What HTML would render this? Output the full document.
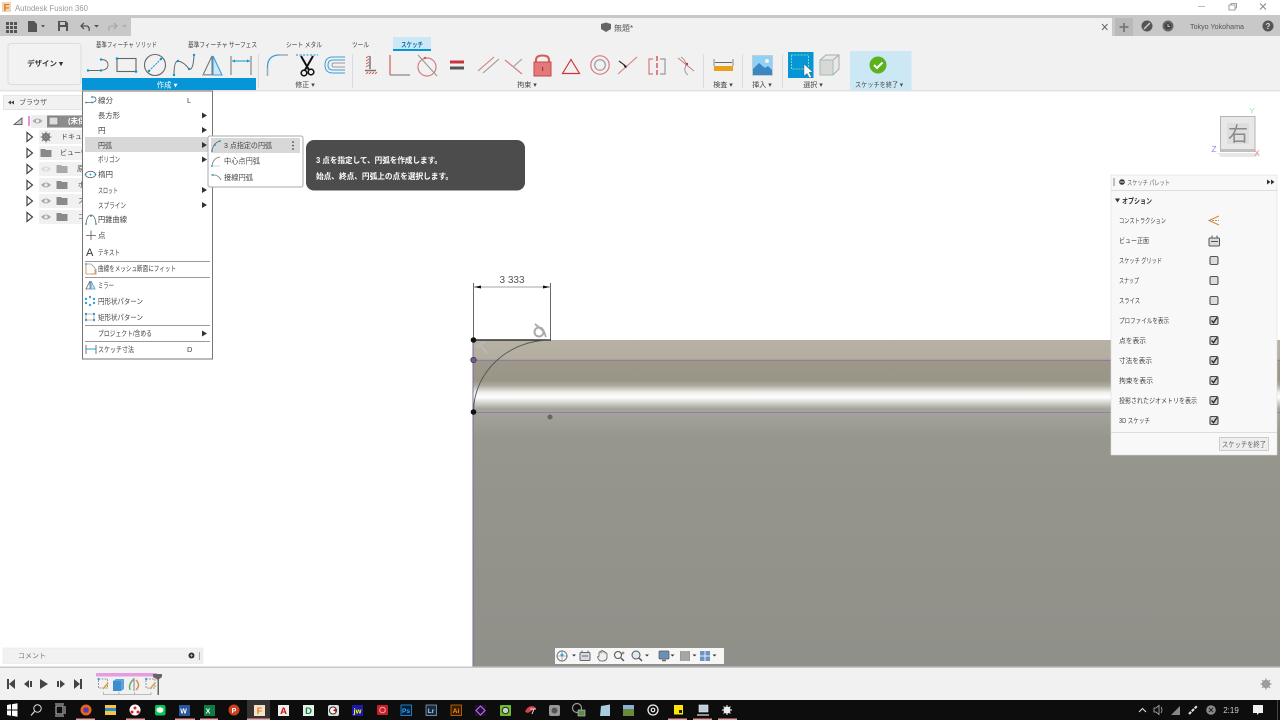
<!DOCTYPE html>
<html><head><meta charset="utf-8"><style>
html,body{margin:0;padding:0;width:1280px;height:720px;overflow:hidden;background:#fff}
svg{display:block;filter:blur(.35px)}
text{font-family:"Liberation Sans","Noto Sans CJK JP",sans-serif;font-size:7.5px;fill:#444}
.m{text-anchor:middle}
.b{font-weight:bold}
</style></head><body>
<svg width="1280" height="720" viewBox="0 0 1280 720" xmlns="http://www.w3.org/2000/svg">
<defs>
<linearGradient id="body" x1="0" y1="0" x2="0" y2="1">
<stop offset="0" stop-color="#b6b1a2"/><stop offset=".055" stop-color="#b3ae9f"/><stop offset=".065" stop-color="#9d9889"/><stop offset=".125" stop-color="#9a9587"/><stop offset=".14" stop-color="#aeaca2"/><stop offset=".16" stop-color="#eeeeea"/><stop offset=".175" stop-color="#fff"/><stop offset=".19" stop-color="#d8d8d3"/><stop offset=".21" stop-color="#a5a59c"/><stop offset=".3" stop-color="#96968d"/><stop offset="1" stop-color="#90908a"/>
</linearGradient>
<g id="chk"><rect x="-4" y="-4" width="8" height="8" rx="1.5" fill="#cfcfcf" stroke="#4a4a4a" stroke-width="1.1"/><path d="M-2.500 0L-.5 2.200L3 -3" fill="none" stroke="#222" stroke-width="1.300"/></g>
<g id="unc"><rect x="-4" y="-4" width="8" height="8" rx="1.5" fill="#dcdcdc" stroke="#555" stroke-width="1.1"/></g>
<path id="tri" d="M0 -3L5 0L0 3Z" fill="#333"/>
<g id="eye"><path d="M-5 0Q0 -5 5 0Q0 5 -5 0Z" fill="#aaa"/><circle r="1.600" fill="#eee"/></g>
<path id="fold" d="M-5.500 -4H-1L0 -3H5.500V4H-5.500Z" fill="#8a8a8a"/>
<path id="exp" d="M-2.500 -4.500L3 0L-2.500 4.500Z" fill="#fff" stroke="#444" stroke-width="1.200"/>
</defs>

<!-- title bar -->
<rect width="1280" height="15" fill="#fff"/>
<rect x="2" y="2" width="9" height="10" fill="#f3d5b5"/><text x="3.500" y="11" class="b" style="font-size:10px;fill:#e07a1f">F</text>
<text x="15" y="11" textLength="73" lengthAdjust="spacingAndGlyphs" style="font-size:8.500px;fill:#999">Autodesk Fusion 360</text>
<path d="M1198 6.500H1205" stroke="#bbb"/>
<path d="M1229 5H1235V10H1229ZM1231 5V3.500H1236.500V8H1235" fill="none" stroke="#888" stroke-width=".8"/>
<path d="M1260 3.500L1266 9.500M1266 3.500L1260 9.500" stroke="#888"/>
<rect y="15" width="1280" height="3" fill="#c8c8c8"/>

<!-- tab row and ribbon -->
<rect y="18" width="1280" height="73" fill="#f1f1f1"/>
<path d="M0 18H131V36H0Z" fill="#c8c8c8"/>
<path d="M1112 18H1280V36H1112Z" fill="#c8c8c8"/>
<rect y="90" width="1280" height="1.500" fill="#e2e2e2"/>

<g fill="#555">
<rect x="6" y="22" width="3" height="3"/><rect x="10" y="22" width="3" height="3"/><rect x="14" y="22" width="3" height="3"/>
<rect x="6" y="26" width="3" height="3"/><rect x="10" y="26" width="3" height="3"/><rect x="14" y="26" width="3" height="3"/>
<rect x="6" y="30" width="3" height="3"/><rect x="10" y="30" width="3" height="3"/><rect x="14" y="30" width="3" height="3"/>
<path d="M28 21H34L37 24V32H28Z"/><path d="M41 25H45L43 27.500Z"/>
<path d="M58 21H66L68 23V31H58Z"/>
<path d="M94 25H99L96.500 27.500Z"/>
</g>
<rect x="60" y="22" width="5" height="3" fill="#ccc"/><rect x="60" y="27" width="6" height="4" fill="#ccc"/>
<path d="M84 23L81 26L84 29M81 26H87Q90 27 89 31" fill="none" stroke="#555" stroke-width="1.300"/>
<path d="M114 23L117 26L114 29M117 26H111Q108 27 109 31" fill="none" stroke="#aaa" stroke-width="1.300"/>
<path d="M122 25H127L124.500 27.500Z" fill="#aaa"/>

<path d="M601 24L606 22.500L611 24V29L606 32L601 29Z" fill="#666"/>
<text x="614" y="31" style="font-size:8px;fill:#555">無題*</text>
<path d="M1102 24L1107.500 30M1107.500 24L1102 30" stroke="#666" stroke-width="1"/>
<rect x="1115" y="18" width="18" height="18" fill="#b9b9b9"/>
<path d="M1124 23V32M1119.500 27H1128.500" stroke="#777" stroke-width="1.800"/>
<circle cx="1147" cy="26" r="5.500" fill="#555"/><path d="M1144 29L1148 25L1150 23" stroke="#ccc" stroke-width="1.500"/>
<circle cx="1168" cy="26" r="5.500" fill="#666"/><circle cx="1168" cy="26" r="3.500" fill="#444"/><path d="M1168 24V26.500H1170" stroke="#bbb" fill="none"/>
<text x="1190" y="29" textLength="54" lengthAdjust="spacingAndGlyphs" style="font-size:7.500px;fill:#555">Tokyo Yokohama</text>
<circle cx="1268" cy="26" r="5.500" fill="#555"/><text x="1268" y="29" class="m b" style="font-size:8px;fill:#ddd">?</text>

<!-- tabs -->
<rect x="393" y="37" width="38" height="14" fill="#cde8f5"/><rect x="393" y="49" width="38" height="2" fill="#0696d7"/>
<text x="96" y="47" textLength="61" lengthAdjust="spacingAndGlyphs" style="font-size:7px">基準フィーチャ ソリッド</text>
<text x="188" y="47" textLength="69" lengthAdjust="spacingAndGlyphs" style="font-size:7px">基準フィーチャ サーフェス</text>
<text x="286" y="47" textLength="36" lengthAdjust="spacingAndGlyphs" style="font-size:7px">シート メタル</text>
<text x="352" y="47" textLength="17" lengthAdjust="spacingAndGlyphs" style="font-size:7px">ツール</text>
<text x="401" y="47" textLength="22" lengthAdjust="spacingAndGlyphs" class="b" style="font-size:7px;fill:#0a78b0">スケッチ</text>

<!-- design -->
<rect x="8" y="43.500" width="73" height="41" rx="3" fill="#f2f2f2" stroke="#dcdcdc"/>
<text x="45" y="66" class="m b" style="font-size:7.500px;fill:#333">デザイン ▾</text>

<!-- create group -->
<rect x="82" y="78" width="174" height="12" fill="#0696d7"/>
<text x="167" y="87.500" class="m" style="font-size:7.500px;fill:#fff">作成 ▾</text>
<!-- line -->
<path d="M88 70.500H100Q108 70 108 65Q108 59.500 101 59.500" fill="none" stroke="#666" stroke-width=".9"/>
<circle cx="88" cy="70.500" r="1.200" fill="#0696d7"/><circle cx="101" cy="70.500" r="1.200" fill="#0696d7"/><circle cx="101" cy="59.500" r="1.200" fill="#0696d7"/>
<!-- rect -->
<rect x="117" y="58.500" width="19" height="13" fill="none" stroke="#666" stroke-width="1.100"/>
<circle cx="117" cy="58.500" r="1.300" fill="#0696d7"/><circle cx="136" cy="71.500" r="1.300" fill="#0696d7"/>
<!-- circle -->
<circle cx="155" cy="65" r="10.500" fill="none" stroke="#666" stroke-width="1.100"/>
<path d="M149 71L161 59" stroke="#0696d7" stroke-width="1" stroke-dasharray="2 1"/>
<circle cx="149" cy="71" r="1.200" fill="#0696d7"/><circle cx="161" cy="59" r="1.200" fill="#0696d7"/>
<!-- spline -->
<path d="M174 75Q174 61 178 61Q184 62 189 69Q193 71 194 56" fill="none" stroke="#666" stroke-width="1"/>
<circle cx="178" cy="61" r="1.200" fill="#0696d7"/><circle cx="189" cy="69" r="1.200" fill="#0696d7"/><circle cx="194" cy="55" r="1.200" fill="#0696d7"/><circle cx="174" cy="75" r="1.200" fill="#0696d7"/>
<!-- mirror -->
<path d="M212 56L203 75H212Z" fill="none" stroke="#777" stroke-width="1.100"/>
<path d="M213 56L222 75H213Z" fill="#cfe6f4" stroke="#3aa0d8" stroke-width="1.100"/>
<rect x="203" y="74" width="9" height="1.500" fill="#999"/>
<!-- dim -->
<path d="M231 56V75M251 56V75" stroke="#888" stroke-width="1.200"/>
<path d="M232 61H250" stroke="#0696d7"/><path d="M232 61L235 59.500V62.500ZM250 61L247 59.500V62.500Z" fill="#0696d7"/>

<g stroke="#dcdcdc"><path d="M258.500 54V88M352.500 54V88M703.500 54V88M742.500 54V88M782.500 54V88"/></g>

<!-- fix -->
<path d="M267.500 76V66Q268 56 278 55H288" fill="none" stroke="#3aa0d8" stroke-width="1.300"/>
<path d="M267.500 76V68M279 55H288" fill="none" stroke="#aaa" stroke-width="1.300"/>
<path d="M296 55H318" stroke="#0696d7" stroke-dasharray="2 1.500"/>
<path d="M301 56L309 70M313 56L305 70" stroke="#111" stroke-width="2"/>
<circle cx="304" cy="73" r="2.800" fill="none" stroke="#111" stroke-width="1.600"/><circle cx="311" cy="72" r="2.800" fill="none" stroke="#111" stroke-width="1.600"/>
<path d="M345 57H333Q325 57 325 65Q325 73 333 73H345" fill="none" stroke="#3aa0d8" stroke-width="1"/>
<path d="M345 60H333Q328 60 328 65Q328 70 333 70H345" fill="none" stroke="#3aa0d8" stroke-width="1"/>
<path d="M345 63H334Q332 63 332 65Q332 67 334 67H345" fill="none" stroke="#999" stroke-width="1"/>
<text x="305" y="87" class="m" style="font-size:7px">修正 ▾</text>

<!-- constraints -->
<path d="M370 56V69" stroke="#777" stroke-width="1.500"/>
<path d="M366 58L369 56M366 61L369 59M366 64L369 62M366 67L369 65" stroke="#d65a5a"/>
<path d="M365 70.500H376" stroke="#777" stroke-width="1.500"/><path d="M366 74L368 72M369 74L371 72M372 74L374 72M375 74L377 72" stroke="#d65a5a"/>
<path d="M390 55V75" stroke="#d65a5a" stroke-width="1.200"/><path d="M390 75H410" stroke="#999" stroke-width="1.500"/>
<circle cx="427" cy="67" r="9" fill="none" stroke="#d97a7a" stroke-width="1.200"/><path d="M418 55L437 76" stroke="#999" stroke-width="1.100"/><circle cx="425" cy="58" r="1.200" fill="#d65a5a"/>
<rect x="450" y="60.500" width="14" height="3" fill="#c8343b"/><rect x="450" y="66.500" width="14" height="3" fill="#555"/>
<path d="M478 71L494 57" stroke="#d97a7a" stroke-width="1.100"/><path d="M483 73L499 59" stroke="#999" stroke-width="1.100"/>
<path d="M505 60L522 74" stroke="#d97a7a" stroke-width="1.200"/><path d="M513 67L522 59" stroke="#aaa" stroke-width="1.200"/>
<path d="M536 62V60Q536 55.500 542.500 55.500Q549 55.500 549 60V62" fill="none" stroke="#d65a5a" stroke-width="2"/>
<rect x="534" y="62" width="17" height="14" fill="#e37a7a" stroke="#c8484c"/><rect x="542" y="67" width="1.200" height="4" fill="#a33"/>
<path d="M571 59.500L579.500 73.500H562.500Z" fill="none" stroke="#d1343c" stroke-width="1.200"/>
<circle cx="600" cy="65" r="9.200" fill="none" stroke="#d97a7a" stroke-width="1.200"/><circle cx="600" cy="65" r="5.300" fill="none" stroke="#999" stroke-width="1.200"/>
<path d="M619 61L627 67" stroke="#333" stroke-width="1.200"/><path d="M618 74L637 57" stroke="#d97a7a" stroke-width="1"/><path d="M623 64L627 67L625 68Z" fill="#222"/>
<path d="M653 59H649V74H653" fill="none" stroke="#d97a7a" stroke-width="1.200"/><path d="M660 59H665V74H660" fill="none" stroke="#999" stroke-width="1.200"/><path d="M657 56V76" stroke="#d1343c" stroke-dasharray="5 2" stroke-width="1.200"/>
<path d="M678 58L694 71" stroke="#d97a7a" stroke-width="1.100"/><path d="M681 57Q688 62 685 68Q684 72 688 75" fill="none" stroke="#999"/><circle cx="687" cy="64" r="1.200" fill="#d1343c"/>
<text x="527" y="87" class="m" style="font-size:7px">拘束 ▾</text>

<!-- inspect/insert/select -->
<path d="M714 59V66M733 59V66" stroke="#888"/><path d="M715 62.500H732" stroke="#666"/>
<rect x="714" y="66" width="19" height="5" fill="#e9a11d"/>
<text x="723" y="87" class="m" style="font-size:7px">検査 ▾</text>
<rect x="752.500" y="55.500" width="20" height="20" fill="#8fd0f5" stroke="#bbb" stroke-width=".5"/>
<path d="M753 75V69L759 63L765 68L768 66L772 70V75Z" fill="#3d86c0"/><circle cx="767" cy="61" r="2" fill="#f4f4e0"/>
<text x="762" y="87" class="m" style="font-size:7px">挿入 ▾</text>
<rect x="788" y="52" width="25.500" height="26" fill="#0696d7"/>
<rect x="791.500" y="55" width="17" height="14" fill="none" stroke="#7fd8a8" stroke-dasharray="2 1"/>
<path d="M804 64L804 76L807 73.500L809.500 78L811.500 77L809 72.500L812.500 72Z" fill="#fff" stroke="#444" stroke-width=".4"/>
<path d="M820 60L826 55H839V69L833 75H820Z" fill="#e8e8e8" stroke="#aaa"/><rect x="820" y="60" width="13" height="15" fill="#d8d8d8" stroke="#9cc4a8"/><path d="M833 60L839 55" stroke="#aaa"/>
<text x="813" y="87" class="m" style="font-size:7px">選択 ▾</text>

<rect x="850" y="51" width="61.500" height="39.500" fill="#cde8f5"/>
<circle cx="878" cy="65" r="8.500" fill="#5cb21d"/><path d="M874 65L877 68L882.500 62.500" fill="none" stroke="#fff" stroke-width="2"/>
<text x="855" y="87" textLength="48" lengthAdjust="spacingAndGlyphs" style="font-size:7px">スケッチを終了 ▾</text>

<!-- canvas -->
<rect y="91.500" width="1280" height="576" fill="#fff"/>
<rect x="473" y="340" width="807" height="327" fill="url(#body)"/>
<path d="M473 340V667" stroke="#7a6aa0" stroke-width="1"/>
<path d="M473 360.500H1280M473 412.500H1280" stroke="#8a72b0" stroke-width=".8"/>

<!-- sketch -->
<path d="M473.500 283V340M550.500 283V340" stroke="#444" stroke-width=".8"/>
<path d="M474 287H550" stroke="#888" stroke-width=".8"/>
<path d="M474 287L481 285.500V288.500ZM550 287L543 285.500V288.500Z" fill="#111"/>
<text x="512" y="283" class="m" style="font-size:10px;fill:#555">3 333</text>
<path d="M473 340H551" stroke="#333" stroke-width="1.500"/>
<path d="M473.500 412A77 72 0 0 1 550 340" fill="none" stroke="#555" stroke-width=".9"/>
<circle cx="473.500" cy="340" r="2.800" fill="#111"/>
<circle cx="473.500" cy="360" r="2.800" fill="#6a5a90" stroke="#333" stroke-width=".6"/>
<circle cx="473.500" cy="412" r="2.800" fill="#111"/>
<circle cx="550" cy="417" r="2.500" fill="#666"/>
<path d="M477 347L485 342M480 345L487 353" stroke="#bbb" stroke-width="2" opacity=".8"/>
<circle cx="539" cy="332" r="4.500" fill="none" stroke="#aaa" stroke-width="2"/><path d="M535 324L544 331.500L546 337" fill="none" stroke="#aaa" stroke-width="1.800"/>

<!-- viewcube -->
<path d="M1217 153H1260L1256 157H1221Z" fill="#ddd" opacity=".7"/>
<rect x="1220.500" y="116.500" width="34.500" height="35" fill="#e8e8e8" stroke="#b5b5b5"/>
<rect x="1220.500" y="149" width="34.500" height="3" fill="#c0c0c0"/>
<rect x="1227" y="123" width="22" height="21" fill="#dedede"/>
<text x="1238" y="141" class="m" style="font-size:20px;fill:#8a8a8a">右</text>
<text x="1252" y="114" class="m" style="font-size:8px;fill:#9fe89f">Y</text>
<text x="1214" y="152" class="m" style="font-size:8.500px;fill:#8c8cf0">Z</text>
<text x="1257" y="156" class="m" style="font-size:8.500px;fill:#f08c8c">X</text>

<!-- browser -->
<rect x="3.500" y="95.500" width="79" height="14" fill="#f2f2f2" stroke="#e4e4e4"/>
<path d="M11 100.500L8 102.500L11 104.500ZM14 100.500L11 102.500L14 104.500Z" fill="#444"/>
<text x="19" y="104.500" style="font-size:7px;fill:#555">ブラウザ</text>
<path d="M14 124.500L22 118V124.500Z" fill="#ccc" stroke="#444" stroke-width=".8"/>
<rect x="28" y="116" width="2" height="10" fill="#e792e0"/>
<rect x="31" y="115" width="52" height="13" fill="#ededed"/>
<use href="#eye" x="37.500" y="121"/>
<rect x="47" y="115.500" width="36" height="12" fill="#8c8c8c"/>
<path d="M49 117H58V125H49Z" fill="#ddd" stroke="#777"/>
<text x="68" y="123.500" class="b" style="font-size:7.500px;fill:#fff">(未保</text>
<rect x="39" y="130" width="44" height="14" fill="#f1f1f1"/>
<rect x="39" y="146" width="44" height="14" fill="#f1f1f1"/>
<rect x="39" y="162" width="44" height="14" fill="#f1f1f1"/>
<rect x="39" y="178" width="44" height="14" fill="#f1f1f1"/>
<rect x="39" y="194" width="44" height="14" fill="#f1f1f1"/>
<rect x="39" y="210" width="44" height="14" fill="#f1f1f1"/>
<use href="#exp" x="29.500" y="137"/><use href="#exp" x="29.500" y="153"/><use href="#exp" x="29.500" y="169"/><use href="#exp" x="29.500" y="185"/><use href="#exp" x="29.500" y="201"/><use href="#exp" x="29.500" y="217"/>
<circle cx="46" cy="137" r="3" fill="none" stroke="#777" stroke-width="2"/>
<path d="M46 131.500V142.500M40.500 137H51.500M42 133L50 141M50 133L42 141" stroke="#777" stroke-width="1.100"/>
<use href="#fold" x="46" y="153"/>
<use href="#eye" x="46" y="169" opacity=".35"/><use href="#fold" x="62" y="169" opacity=".7"/>
<use href="#eye" x="46" y="185"/><use href="#fold" x="62" y="185"/>
<use href="#eye" x="46" y="201"/><use href="#fold" x="62" y="201"/>
<use href="#eye" x="46" y="217"/><use href="#fold" x="62" y="217"/>
<text x="61" y="139" style="font-size:7px">ドキュメ</text>
<text x="60" y="155" style="font-size:7px">ビュー管</text>
<text x="77" y="171" style="font-size:7px">原</text>
<text x="78" y="187" style="font-size:7px">ボ</text>
<text x="78" y="203" style="font-size:7px">ス</text>
<text x="78" y="219" style="font-size:7px">コ</text>

<!-- create menu -->
<rect x="82.500" y="91" width="130" height="268" fill="#fff" stroke="#777" stroke-width="1"/>
<rect x="85" y="137" width="125" height="15" fill="#d8d8d8"/>
<text x="98" y="103" textLength="15" lengthAdjust="spacingAndGlyphs">線分</text>
<text x="187" y="103">L</text>
<text x="98" y="118" textLength="22" lengthAdjust="spacingAndGlyphs">長方形</text>
<text x="98" y="133">円</text>
<text x="98" y="148" textLength="14" lengthAdjust="spacingAndGlyphs">円弧</text>
<text x="98" y="162" textLength="22" lengthAdjust="spacingAndGlyphs">ポリゴン</text>
<text x="98" y="177" textLength="15" lengthAdjust="spacingAndGlyphs">楕円</text>
<text x="98" y="193" textLength="20" lengthAdjust="spacingAndGlyphs">スロット</text>
<text x="98" y="208" textLength="28" lengthAdjust="spacingAndGlyphs">スプライン</text>
<text x="98" y="222" textLength="29" lengthAdjust="spacingAndGlyphs">円錐曲線</text>
<text x="98" y="238">点</text>
<text x="98" y="255" textLength="22" lengthAdjust="spacingAndGlyphs">テキスト</text>
<text x="98" y="271" textLength="78" lengthAdjust="spacingAndGlyphs">曲線をメッシュ断面にフィット</text>
<text x="98" y="288" textLength="16" lengthAdjust="spacingAndGlyphs">ミラー</text>
<text x="98" y="304" textLength="45" lengthAdjust="spacingAndGlyphs">円形状パターン</text>
<text x="98" y="320" textLength="45" lengthAdjust="spacingAndGlyphs">矩形状パターン</text>
<text x="98" y="336" textLength="54" lengthAdjust="spacingAndGlyphs">プロジェクト/含める</text>
<text x="98" y="352" textLength="36" lengthAdjust="spacingAndGlyphs">スケッチ寸法</text>
<text x="187" y="352">D</text>
<use href="#tri" x="202" y="115.500"/><use href="#tri" x="202" y="130"/><use href="#tri" x="202" y="145"/><use href="#tri" x="202" y="159.500"/><use href="#tri" x="202" y="190"/><use href="#tri" x="202" y="205"/><use href="#tri" x="202" y="333.500"/>
<g stroke="#999" stroke-width="1"><path d="M85 261.500H210M85 277.500H210M85 325.500H210M85 341.500H210"/></g>
<!-- menu icons -->
<path d="M86 102.500H92Q96 102 96 99.500Q96 96.500 92 97" fill="none" stroke="#666" stroke-width=".8"/><circle cx="86" cy="102.500" r=".9" fill="#0696d7"/><circle cx="92" cy="102.500" r=".9" fill="#0696d7"/><circle cx="92" cy="97" r=".9" fill="#0696d7"/>
<ellipse cx="90.500" cy="174.500" rx="5" ry="3.200" fill="none" stroke="#666" stroke-width=".8"/><circle cx="90.500" cy="174.500" r=".9" fill="#0696d7"/><circle cx="85.500" cy="174.500" r=".9" fill="#0696d7"/><circle cx="95.500" cy="174.500" r=".9" fill="#0696d7"/>
<path d="M86 224Q87 215 91 215Q95 215 96 224" fill="none" stroke="#666" stroke-width=".8"/><circle cx="86" cy="224" r=".9" fill="#0696d7"/><circle cx="96" cy="224" r=".9" fill="#0696d7"/><circle cx="91" cy="216" r=".9" fill="#0696d7"/>
<path d="M91 230.500V240M86 235.500H96" stroke="#555" stroke-width=".8"/>
<text x="86" y="256" style="font-size:11px;fill:#333">A</text>
<path d="M86 264H91L95 268V274H86" fill="none" stroke="#999" stroke-width=".8"/><path d="M86 264V274M91 274H96V269" fill="none" stroke="#e08a3a" stroke-width=".9"/><circle cx="86" cy="264" r=".9" fill="#0696d7"/>
<path d="M90 281L86 289H90Z" fill="none" stroke="#666" stroke-width=".8"/><path d="M91 281L95 289H91Z" fill="#cfe6f4" stroke="#3aa0d8" stroke-width=".8"/>
<g fill="#3aa0d8"><circle cx="90" cy="297" r="1.200"/><circle cx="94" cy="299" r="1.200"/><circle cx="94" cy="303" r="1.200"/><circle cx="90" cy="305" r="1.200"/><circle cx="86" cy="303" r="1.200"/><circle cx="86" cy="299" r="1.200"/></g>
<g fill="#3aa0d8"><circle cx="86" cy="314" r="1.200"/><circle cx="94" cy="314" r="1.200"/><circle cx="86" cy="320" r="1.200"/><circle cx="94" cy="320" r="1.200"/></g><path d="M86 314H94M86 320H94M86 314V320M94 314V320" stroke="#777" stroke-width=".5"/>
<path d="M86 345V354M96 345V354" stroke="#777"/><path d="M86 349H96" stroke="#0696d7" stroke-width=".9"/>

<!-- submenu -->
<rect x="208" y="136" width="95" height="51" rx="2" fill="#fff" stroke="#aaa" stroke-width="1"/>
<rect x="211" y="138" width="89" height="15" fill="#d8d8d8"/>
<text x="224" y="148" textLength="48" lengthAdjust="spacingAndGlyphs" style="font-size:7.200px">3 点指定の円弧</text>
<text x="224" y="163.500" textLength="36" lengthAdjust="spacingAndGlyphs" style="font-size:7.200px">中心点円弧</text>
<text x="224" y="180" textLength="29" lengthAdjust="spacingAndGlyphs" style="font-size:7.200px">接線円弧</text>
<circle cx="293" cy="142" r=".8" fill="#222"/><circle cx="293" cy="145.500" r=".8" fill="#222"/><circle cx="293" cy="149" r=".8" fill="#222"/>
<path d="M212 151Q213 143 220 141" fill="none" stroke="#666" stroke-width=".8"/><circle cx="212" cy="151" r=".9" fill="#0696d7"/><circle cx="220" cy="141" r=".9" fill="#0696d7"/><circle cx="215" cy="145" r=".9" fill="#0696d7"/>
<path d="M212 166Q213 158 220 157" fill="none" stroke="#777" stroke-width=".8"/><path d="M212 166H220" stroke="#bbb" stroke-width=".6"/><circle cx="212" cy="166" r=".9" fill="#0696d7"/>
<path d="M211 175H215Q219 176 221 180" fill="none" stroke="#777" stroke-width=".8"/><circle cx="213" cy="175" r=".9" fill="#0696d7"/>

<!-- tooltip -->
<rect x="306" y="140" width="219" height="50.500" rx="8" fill="#4c4c4c"/>
<text x="316" y="163" textLength="126" lengthAdjust="spacingAndGlyphs" style="font-size:8px;fill:#fff" class="b">3 点を指定して、円弧を作成します。</text>
<text x="316" y="179" textLength="137" lengthAdjust="spacingAndGlyphs" style="font-size:8px;fill:#fff" class="b">始点、終点、円弧上の点を選択します。</text>

<!-- palette -->
<rect x="1111" y="175" width="166" height="280" fill="#f8f8f8" stroke="#dedede" stroke-width=".6"/>
<path d="M1111 190.500H1277M1111 432.500H1277" stroke="#ddd"/>
<path d="M1114 178V186" stroke="#888"/>
<circle cx="1122" cy="182" r="2.800" fill="#333"/><rect x="1120" y="181.500" width="4" height="1" fill="#ddd"/>
<text x="1127" y="185" textLength="43" lengthAdjust="spacingAndGlyphs" style="font-size:7px;fill:#666">スケッチ パレット</text>
<path d="M1267 179.500L1270.500 182L1267 184.500ZM1271 179.500L1274.500 182L1271 184.500Z" fill="#333"/>
<path d="M1115 198.500H1120L1117.500 202.500Z" fill="#333"/>
<text x="1122" y="203.500" textLength="30" lengthAdjust="spacingAndGlyphs" class="b" style="font-size:7.500px;fill:#333">オプション</text>
<text x="1119" y="223" textLength="47" lengthAdjust="spacingAndGlyphs" style="font-size:7px">コンストラクション</text>
<text x="1119" y="243" textLength="30" lengthAdjust="spacingAndGlyphs" style="font-size:7px">ビュー正面</text>
<text x="1119" y="263" textLength="43" lengthAdjust="spacingAndGlyphs" style="font-size:7px">スケッチ グリッド</text>
<text x="1119" y="283" textLength="20" lengthAdjust="spacingAndGlyphs" style="font-size:7px">スナップ</text>
<text x="1119" y="303" textLength="21" lengthAdjust="spacingAndGlyphs" style="font-size:7px">スライス</text>
<text x="1119" y="323" textLength="50" lengthAdjust="spacingAndGlyphs" style="font-size:7px">プロファイルを表示</text>
<text x="1119" y="343" textLength="27" lengthAdjust="spacingAndGlyphs" style="font-size:7px">点を表示</text>
<text x="1119" y="363" textLength="33" lengthAdjust="spacingAndGlyphs" style="font-size:7px">寸法を表示</text>
<text x="1119" y="383" textLength="34" lengthAdjust="spacingAndGlyphs" style="font-size:7px">拘束を表示</text>
<text x="1119" y="403" textLength="78" lengthAdjust="spacingAndGlyphs" style="font-size:7px">投影されたジオメトリを表示</text>
<text x="1119" y="423" textLength="31" lengthAdjust="spacingAndGlyphs" style="font-size:7px">3D スケッチ</text>
<path d="M1219 216L1209 220.500L1219 225" fill="none" stroke="#e0852a" stroke-width="1"/><path d="M1209 220.500H1219" stroke="#999" stroke-dasharray="2 1"/>
<rect x="1209" y="238" width="10.500" height="8" rx="1" fill="#d8dce2" stroke="#555"/><path d="M1212 238V235.500M1217 238V235.500M1211 241.500H1218" stroke="#555"/>
<use href="#unc" x="1214" y="260.500"/><use href="#unc" x="1214" y="280.500"/><use href="#unc" x="1214" y="300.500"/>
<use href="#chk" x="1214" y="320.500"/><use href="#chk" x="1214" y="340.500"/><use href="#chk" x="1214" y="360.500"/><use href="#chk" x="1214" y="380.500"/><use href="#chk" x="1214" y="400.500"/><use href="#chk" x="1214" y="420.500"/>
<rect x="1219.500" y="437.500" width="49" height="13" fill="#eee" stroke="#ccc"/>
<text x="1244" y="447" textLength="44" lengthAdjust="spacingAndGlyphs" class="m" style="font-size:7.500px;fill:#666">スケッチを終了</text>

<!-- nav bar -->
<rect x="555" y="648" width="169" height="16" fill="#f6f6f6"/>
<ellipse cx="562" cy="656" rx="5" ry="5" fill="none" stroke="#777"/><path d="M562 650V662M556.500 656H568" stroke="#777" stroke-width=".6"/><circle cx="562" cy="655" r="1.500" fill="#3aa0d8"/>
<path d="M572 654.500H576L574 656.500ZM645 654.500H649L647 656.500ZM670.500 654.500H674.500L672.500 656.500ZM692.500 654.500H696.500L694.500 656.500ZM712.500 654.500H716.500L714.500 656.500Z" fill="#333"/>
<rect x="580" y="652.500" width="10" height="8" rx="1" fill="#d8dce2" stroke="#666"/><path d="M582 652V650.500M588 652V650.500M582 656H588" stroke="#666"/>
<path d="M599 656V652.500Q600 651 601 652.500V651Q602 650 603 651V652Q604 651 605 652V653Q606 652.500 607 653.500V658Q606 661 603 661H601Q599 661 597.500 657Z" fill="#eee" stroke="#555" stroke-width=".8"/>
<circle cx="618" cy="655" r="3.500" fill="none" stroke="#555" stroke-width="1.100"/><path d="M621 658L624 661" stroke="#555" stroke-width="1.500"/><path d="M623 651.500V654.500M621.500 653H624.500" stroke="#555" stroke-width=".7"/>
<circle cx="636" cy="655" r="4" fill="#dfeaf2" stroke="#555"/><path d="M639 658L642 661" stroke="#555" stroke-width="1.500"/>
<rect x="659" y="651" width="10" height="8" rx="1" fill="#6b90b8" stroke="#555" stroke-width=".7"/><path d="M662 660.500H666" stroke="#666" stroke-width="1.500"/>
<rect x="680" y="651" width="10" height="10" fill="#999"/><path d="M682 651V661M684 651V661M686 651V661M688 651V661" stroke="#ccc" stroke-width=".5"/>
<rect x="700" y="651" width="10" height="10" fill="#6c93c4"/><path d="M705 651V661M700 656H710" stroke="#e8eef6"/>

<!-- comments -->
<rect x="3" y="648" width="200" height="15.500" fill="#f1f1f1" stroke="#e6e6e6" stroke-width=".6"/>
<text x="18" y="658" style="font-size:7px;fill:#777">コメント</text>
<circle cx="191.500" cy="655.500" r="3" fill="#333"/><path d="M190 655.500H193M191.500 654V657" stroke="#ddd" stroke-width=".6"/>
<path d="M199.500 652V660" stroke="#aaa" stroke-width="1.200"/>

<!-- timeline -->
<rect y="667" width="1280" height="33.500" fill="#f1f1f1"/>
<rect y="666.500" width="1280" height="1.500" fill="#c8c8c8"/>
<g fill="#444">
<path d="M7 679H9V689H7ZM15 679V689L9 684Z"/>
<path d="M24 684L29 680V688ZM30 681H32V687H30Z"/>
<path d="M40 679L48 684L40 689Z"/>
<path d="M57 681H59V687H57ZM60 680L65 684L60 688Z"/>
<path d="M74 679L80 684L74 689ZM80 679H82V689H80Z"/>
</g>
<rect x="96" y="673" width="61" height="3.500" fill="#e79be3"/>
<path d="M153 674H162V677L158 680L153 677Z" fill="#666"/><rect x="157.500" y="677" width="1.500" height="18" fill="#666"/>
<rect x="98.500" y="679" width="9" height="9" fill="none" stroke="#999" stroke-dasharray="2 1"/><path d="M103 689L108 683" stroke="#e0a030" stroke-width="1.500"/><circle cx="98.500" cy="679" r="1" fill="#0696d7"/>
<path d="M113 681L116 679H124V689L121 691H113Z" fill="#5aa5de"/><rect x="113" y="681" width="8" height="10" fill="#3c8ed0"/>
<path d="M130 690Q128 684 134 679" fill="none" stroke="#6ab06a" stroke-width="1.500"/><path d="M136 680Q141 685 136 690" fill="none" stroke="#e08a50" stroke-width="1.500"/><path d="M134 678V691" stroke="#888"/>
<rect x="146" y="679" width="9" height="9" fill="none" stroke="#999" stroke-dasharray="2 1"/><path d="M150 689L155 683" stroke="#e0a030" stroke-width="1.500"/><circle cx="146" cy="679" r="1" fill="#0696d7"/>
<path d="M103.500 692V694.500H151V692M119 692V694.500M134.500 692V694.500" fill="none" stroke="#aaa" stroke-width=".8"/>
<circle cx="1266" cy="684" r="3" fill="none" stroke="#999" stroke-width="2"/>
<path d="M1266 678.500V689.500M1260.500 684H1271.500M1262 680L1270 688M1270 680L1262 688" stroke="#999" stroke-width="1.200"/>

<!-- taskbar -->
<rect y="700" width="1280" height="20" fill="#0d0d0d"/>
<path d="M7 705L11 704.300V709.500H7ZM12 704.200L17.500 703.300V709.500H12ZM7 710.500H11V715.700L7 715ZM12 710.500H17.500V716.700L12 715.800Z" fill="#fff"/>
<circle cx="37.500" cy="708.500" r="3.700" fill="none" stroke="#ddd"/><path d="M34.500 711.500L31 715.500" stroke="#ddd" stroke-width="1.200"/>
<rect x="56" y="706" width="7" height="8" fill="none" stroke="#ccc"/><path d="M55 704H64M55 716H64M65 706V714" stroke="#ccc"/>
<rect x="247" y="700" width="23" height="20" fill="#333"/>
<circle cx="86" cy="710" r="5.500" fill="#e8641b"/><circle cx="86" cy="710" r="2.800" fill="#5a3bb0"/>
<rect x="105" y="705" width="11" height="10" fill="#f6c544"/><rect x="105" y="708" width="11" height="3" fill="#2a8ad0"/>
<circle cx="135" cy="710" r="5.500" fill="#fff"/><circle cx="135" cy="708" r="1.500" fill="#d22"/><circle cx="132" cy="712" r="1.500" fill="#d22"/><circle cx="138" cy="712" r="1.500" fill="#d22"/>
<rect x="155" y="705" width="10.500" height="10.500" rx="2" fill="#06c755"/><ellipse cx="160" cy="710" rx="3.500" ry="2.800" fill="#fff"/>
<rect x="179" y="705" width="11" height="11" fill="#2b579a"/><text x="183.500" y="713.500" class="m b" style="font-size:7px;fill:#fff">W</text>
<rect x="204" y="705" width="11" height="11" fill="#107c41"/><text x="208" y="713.500" class="m b" style="font-size:7px;fill:#fff">X</text>
<circle cx="234" cy="710" r="5.500" fill="#c8401d"/><text x="234" y="713" class="m b" style="font-size:7px;fill:#fff">P</text>
<rect x="254" y="705" width="11" height="11" fill="#f5e0c8"/><text x="259.500" y="714" class="m b" style="font-size:9px;fill:#e07a1f">F</text>
<rect x="278" y="705" width="11" height="11" fill="#eee"/><text x="283.500" y="714" class="m b" style="font-size:9.500px;fill:#c11">A</text>
<rect x="303" y="705" width="11" height="11" fill="#e6f2e8"/><text x="308.500" y="714" class="m b" style="font-size:9.500px;fill:#1a7f4b">D</text>
<rect x="328" y="705" width="11" height="11" rx="2" fill="#ddd"/><circle cx="333" cy="710.500" r="3.500" fill="#fff" stroke="#333"/><path d="M333 710.500L336 708V712Z" fill="#c11"/>
<rect x="352" y="705" width="11" height="11" fill="#1a1ab0"/><text x="357.500" y="713.500" class="m b" style="font-size:7.500px;fill:#ff0">jw</text>
<rect x="377" y="705" width="11" height="10" rx="1" fill="#c4202a"/><circle cx="382.500" cy="710" r="2.800" fill="none" stroke="#f5a0a0"/>
<rect x="401" y="705" width="10.500" height="10.500" fill="#001e36" stroke="#31a8ff" stroke-width=".7"/><text x="406" y="713" class="m b" style="font-size:6.500px;fill:#31a8ff">Ps</text>
<rect x="426" y="705" width="10.500" height="10.500" fill="#1a2a3a" stroke="#8ab4d8" stroke-width=".7"/><text x="431" y="713" class="m b" style="font-size:6.500px;fill:#a8d0f0">Lr</text>
<rect x="451" y="705" width="10.500" height="10.500" fill="#3a1c00" stroke="#e87a10" stroke-width=".7"/><text x="456" y="713" class="m b" style="font-size:6.500px;fill:#ff9a00">Ai</text>
<rect x="475" y="705" width="11" height="11" fill="#2a0a3a"/><path d="M480.500 706L485 710.500L480.500 715L476 710.500Z" fill="none" stroke="#b080e0"/>
<rect x="500" y="705" width="11" height="11" rx="1" fill="#6abf2a"/><circle cx="505.500" cy="710.500" r="3.300" fill="#ccc" stroke="#222"/>
<path d="M525 712Q527 706 533 706L536 708L528 713Z" fill="#d8404a"/><path d="M530 709H536M532 714L534 709" stroke="#ddd"/>
<rect x="549" y="705" width="11" height="11" rx="2" fill="#999"/><circle cx="554.500" cy="710.500" r="3" fill="#555"/>
<circle cx="577" cy="708" r="4.500" fill="none" stroke="#999" stroke-width="1.200"/><rect x="578" y="710" width="7" height="6" fill="#5a8a4a" stroke="#ccc" stroke-width=".6"/>
<path d="M601 706L610 704.500V716H600Z" fill="#a8cce0"/>
<rect x="623" y="705" width="11" height="11" fill="#6a8a3a"/><rect x="623" y="705" width="11" height="4" fill="#8ab0d8"/>
<circle cx="653" cy="710" r="5" fill="none" stroke="#eee" stroke-width="1.300"/><circle cx="653" cy="710" r="1.800" fill="none" stroke="#eee" stroke-width="1.200"/>
<rect x="674" y="705" width="9" height="9.500" fill="#ffe600"/><rect x="679" y="710" width="3" height="3" fill="#222"/>
<rect x="699" y="705" width="9" height="7" fill="#bcd" stroke="#eee" stroke-width=".6"/><path d="M697 715H709" stroke="#bbb" stroke-width="1.500"/>
<circle cx="727" cy="710" r="2.500" fill="none" stroke="#eee" stroke-width="2"/><path d="M727 705V715M722 710H732M723.500 706.500L730.500 713.500M730.500 706.500L723.500 713.500" stroke="#eee" stroke-width="1"/>
<g fill="#e9a0a0">
<rect x="76" y="718.500" width="19" height="1.500"/><rect x="126" y="718.500" width="19" height="1.500"/><rect x="175" y="718.500" width="20" height="1.500"/><rect x="200" y="718.500" width="18" height="1.500"/><rect x="247" y="718.500" width="23" height="1.500"/><rect x="668" y="718.500" width="19" height="1.500"/><rect x="693" y="718.500" width="19" height="1.500"/><rect x="718" y="718.500" width="19" height="1.500"/>
</g>
<path d="M1139 712L1142.500 708.500L1146 712" fill="none" stroke="#ddd" stroke-width="1.100"/>
<path d="M1154 708H1156L1159 705.500V714.500L1156 712H1154Z" fill="none" stroke="#bbb" stroke-width=".8"/><path d="M1161 707Q1163 710 1161 713" fill="none" stroke="#aaa" stroke-width=".8"/>
<path d="M1171 715L1180 706V715Z" fill="#888"/>
<path d="M1189 714L1197 706" stroke="#ddd" stroke-width="2.200" stroke-dasharray="3 1"/>
<circle cx="1211" cy="710" r="4.800" fill="#888"/><path d="M1209 708L1213 712M1213 708L1209 712" stroke="#222"/>
<text x="1231" y="713" class="m" style="font-size:8px;fill:#ccc">2:19</text>
<path d="M1253 705H1263V713H1259L1257 715V713H1253Z" fill="#eee"/>
<rect x="1277" y="700" width="1" height="20" fill="#444"/>
</svg>
</body></html>
